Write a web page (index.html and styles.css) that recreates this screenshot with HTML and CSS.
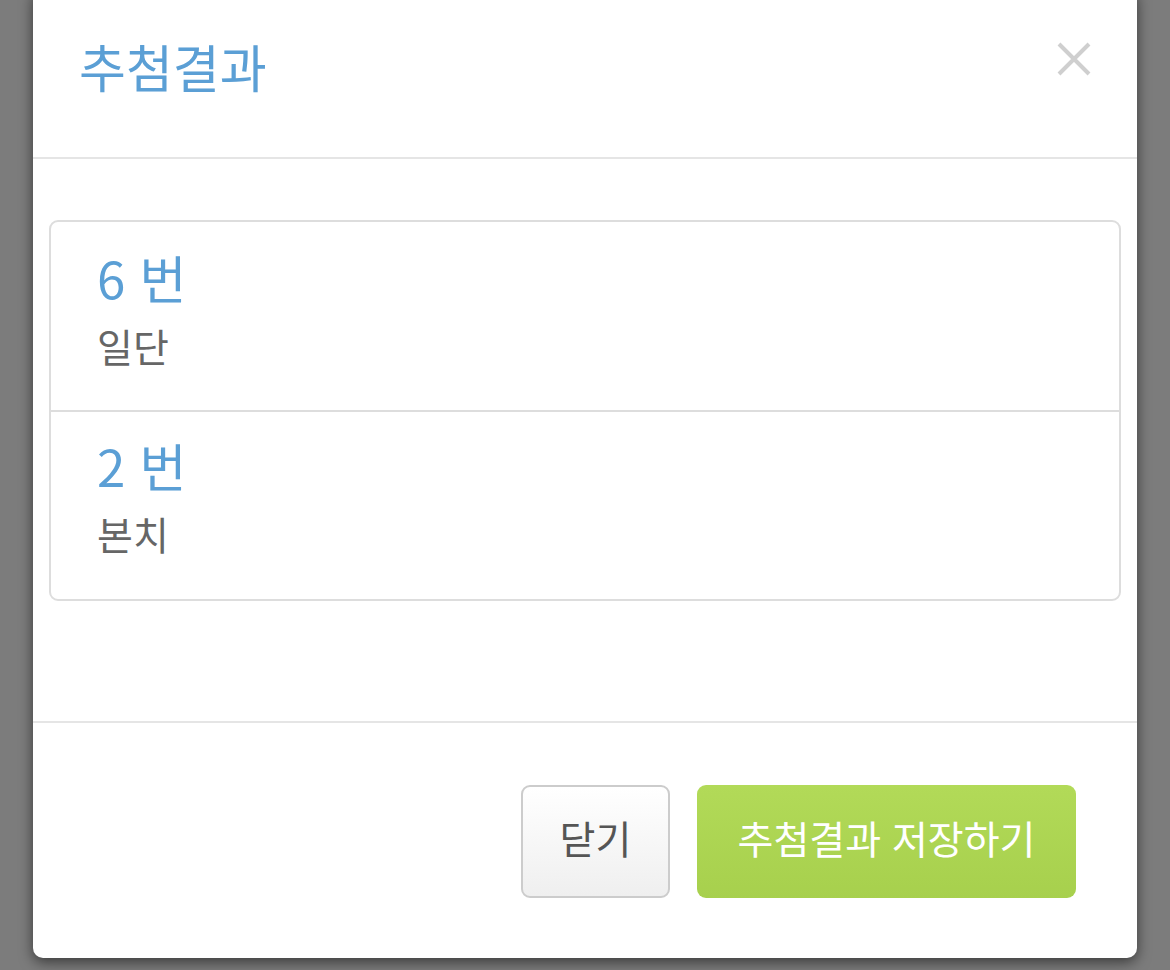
FILE: index.html
```html
<!DOCTYPE html>
<html lang="ko">
<head>
<meta charset="utf-8">
<title>추첨결과</title>
<link rel="stylesheet" href="styles.css">
</head>
<body>
<div class="backdrop">
  <div class="modal">
    <div class="modal-header">
      <h4 class="modal-title">추첨결과</h4>
      <button class="close" aria-label="닫기">
        <svg width="34" height="34" viewBox="0 0 34 34"><path d="M2 2 L32 32 M32 2 L2 32" stroke="#cfcfcf" stroke-width="4" fill="none"/></svg>
      </button>
    </div>
    <div class="modal-body">
      <div class="list-group">
        <div class="list-item">
          <div class="item-num">6 번</div>
          <div class="item-name">일단</div>
        </div>
        <div class="list-item">
          <div class="item-num">2 번</div>
          <div class="item-name">본치</div>
        </div>
      </div>
    </div>
    <div class="modal-footer">
      <button class="btn btn-default">닫기</button>
      <button class="btn btn-success">추첨결과 저장하기</button>
    </div>
  </div>
</div>
</body>
</html>
```
FILE: styles.css
```css
html, body {
  margin: 0;
  padding: 0;
  height: 100%;
  overflow: hidden;
}
body {
  background: #7c7c7c;
  font-family: "Noto Sans CJK KR", "Noto Sans", sans-serif;
}
.backdrop {
  padding-left: 33px;
  width: 1104px;
}
.modal {
  margin-top: -12px;
  background: #fff;
  border-radius: 10px;
  box-shadow: 0 4px 14px rgba(0, 0, 0, 0.55);
  width: 1104px;
}
.modal-header {
  height: 171px;
  border-bottom: 2px solid #e5e5e5;
  display: flex;
  align-items: flex-start;
  justify-content: space-between;
  padding: 0 46px 0 46px;
  box-sizing: border-box;
}
.modal-title {
  margin: 40px 0 0 0;
  font-size: 51px;
  font-weight: 400;
  line-height: 76px;
  color: #5b9fd5;
}
.close {
  margin-top: 54px;
  padding: 0;
  border: 0;
  background: none;
  width: 34px;
  height: 34px;
}
.close svg { display: block; }
.modal-body {
  padding: 61px 16px 120px 16px;
}
.list-group {
  border: 2px solid #dddddd;
  border-radius: 9px;
}
.list-item {
  padding: 22px 46px 0 46px;
  height: 188px;
  box-sizing: border-box;
}
.list-item + .list-item {
  border-top: 2px solid #dddddd;
  height: 189px;
  padding-top: 20px;
}
.item-num {
  font-size: 51px;
  line-height: 66px;
  color: #5b9fd5;
}
.item-name {
  font-size: 39px;
  line-height: 54px;
  color: #666666;
  margin-top: 8px;
}
.modal-footer {
  border-top: 2px solid #e5e5e5;
  padding: 62px 61px 60px 0;
  display: flex;
  justify-content: flex-end;
  gap: 27px;
}
.btn {
  height: 113px;
  font-family: "Noto Sans CJK KR", "Noto Sans", sans-serif;
  font-size: 39px;
  border-radius: 9px;
  padding: 0 0 10px 0;
}
.btn-default {
  width: 149px;
  border: 2px solid #cccccc;
  background: linear-gradient(#ffffff, #efefef);
  color: #555555;
}
.btn-success {
  width: 379px;
  border: 0;
  background: linear-gradient(#b2da58, #a7d04d);
  color: #ffffff;
}
```
